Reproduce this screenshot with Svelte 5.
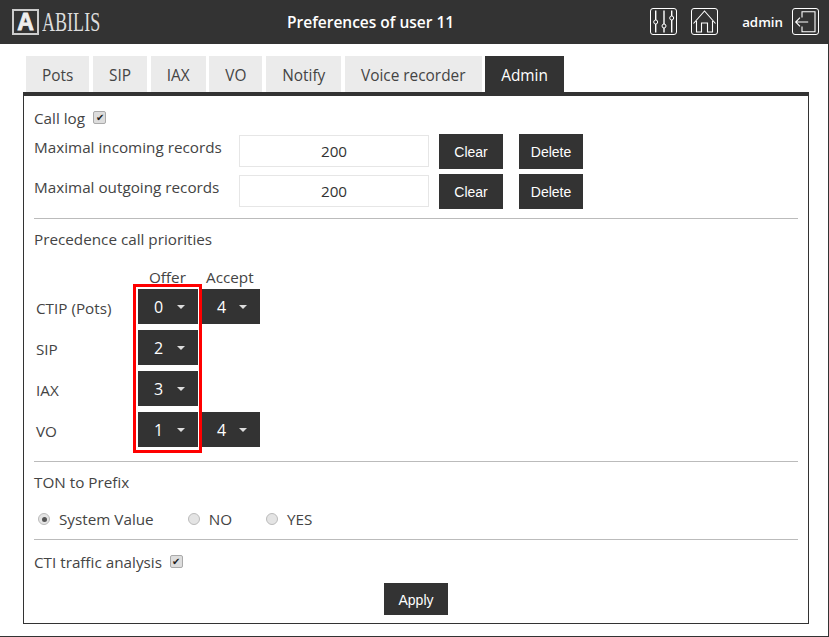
<script>
  const tabs = ["Pots", "SIP", "IAX", "VO", "Notify", "Voice recorder", "Admin"];
  const records = [
    { label: "Maximal incoming records", value: "200" },
    { label: "Maximal outgoing records", value: "200" },
  ];
  const priorities = [
    { label: "CTIP (Pots)", offer: 0, accept: 4 },
    { label: "SIP", offer: 2 },
    { label: "IAX", offer: 3 },
    { label: "VO", offer: 1, accept: 4 },
  ];
  const tonOptions = [
    { label: "System Value", checked: true },
    { label: "NO", checked: false },
    { label: "YES", checked: false },
  ];
</script>

<div class="page">
  <header class="topbar">
    <div class="logo">
      <span class="logo-box">A</span>
      <span class="logo-text">ABILIS</span>
    </div>
    <div class="title">Preferences of user 11</div>
    <div class="tools">
      <span class="icon-btn">
        <svg width="28" height="28" viewBox="0 0 28 28" fill="none" stroke="#fff" stroke-width="1">
          <rect x="0.5" y="0.5" width="26" height="26" rx="2.5" />
          <path d="M5.700 2.500v9.500M5.700 16v8.500M14 2.500v13.500M14 20v4.500M21.700 2.500v5.500M21.700 12v12.500" stroke-width="1.400" />
          <circle cx="5.700" cy="14" r="2" /><circle cx="14" cy="18" r="2" /><circle cx="21.700" cy="10" r="2" />
        </svg>
      </span>
      <span class="icon-btn home">
        <svg width="28" height="28" viewBox="0 0 28 28" fill="none" stroke="#fff" stroke-width="1">
          <rect x="0.5" y="0.5" width="26" height="26" rx="2.5" />
          <path d="M2.500 15.500 13.500 3 24.500 15.500M5.500 13v11h5v-9h6v9h5V13" stroke-width="1.100" />
        </svg>
      </span>
      <span class="user">admin</span>
      <span class="icon-btn">
        <svg width="28" height="28" viewBox="0 0 28 28" fill="none" stroke="#fff" stroke-width="1">
          <rect x="0.5" y="0.5" width="26" height="26" rx="2.5" />
          <path d="M10 9.500V3.700h13v20H10V18.500M3.700 14h12.500M8 9.700 3.700 14 8 18.300" stroke-width="1.100" />
        </svg>
      </span>
    </div>
  </header>

  <main class="content">
    <nav class="tabs">
      {#each tabs as tab}
        <div class="tab" class:active={tab === "Admin"}>{tab}</div>
      {/each}
    </nav>

    <section class="panel">
      <div class="check-row first">
        <span>Call log</span>
        <span class="check">✔</span>
      </div>
      {#each records as rec}
        <div class="record">
          <span class="record-label">{rec.label}</span>
          <div class="field">{rec.value}</div>
          <button class="btn clear">Clear</button>
          <button class="btn">Delete</button>
        </div>
      {/each}

      <hr class="rule-a" />
      <div class="heading">Precedence call priorities</div>

      <div class="prio">
        <div class="prio-head">
          <span class="col-offer">Offer</span>
          <span class="col-accept">Accept</span>
        </div>
        <div class="marked">
          {#each priorities as p}
            <div class="prio-row">
              <span class="prio-label">{p.label}</span>
              <div class="select">{p.offer}<i class="caret"></i></div>
              {#if p.accept !== undefined}
                <div class="select second">{p.accept}<i class="caret"></i></div>
              {/if}
            </div>
          {/each}
          <div class="highlight"></div>
        </div>
      </div>

      <hr class="rule-b" />
      <div class="heading ton">TON to Prefix</div>
      <div class="radios">
        {#each tonOptions as opt}
          <span class="radio-item">
            <span class="radio" class:on={opt.checked}></span>{opt.label}
          </span>
        {/each}
      </div>

      <hr class="rule-c" />
      <div class="check-row">
        <span>CTI traffic analysis</span>
        <span class="check">✔</span>
      </div>
      <div class="apply"><button class="btn">Apply</button></div>
    </section>
  </main>
</div>

<style>
  :global(body) { margin: 0; background: #fff; }
  .page { width: 829px; height: 637px; box-sizing: border-box; border-right: 1px solid #333; border-bottom: 1px solid #333; font-family: "Open Sans", sans-serif; font-size: 15.25px; color: #444; overflow: hidden; }
  .topbar { height: 44px; background: #333; color: #fff; display: flex; align-items: center; position: relative; margin-right: -1px; }
  .logo { display: flex; align-items: center; margin-left: 12px; gap: 3px; }
  .logo-box { box-sizing: border-box; width: 27px; height: 26px; border: 2px solid #ccc; font-family: "Liberation Sans", sans-serif; font-weight: 700; font-size: 23px; line-height: 23px; text-align: center; color: #eee; -webkit-text-stroke: 0.8px #eee; }
  .logo-text { font-family: "Liberation Serif", serif; font-size: 28px; color: #ddd; display: block; width: 58px; transform: scaleX(0.645); transform-origin: left center; }
  .title { position: absolute; left: 287px; top: 11px; font-size: 15.5px; font-weight: 600; line-height: 22px; }
  .tools { margin-left: auto; display: flex; align-items: center; margin-right: 10px; }
  .icon-btn { display: block; height: 27px; width: 27px; margin-top: -1px; }
  .icon-btn svg { display: block; }
  .home { margin-left: 14px; }
  .user { margin: 0 9px 0 24px; font-size: 13.3px; font-weight: 600; }
  .content { padding: 12px 19px 0 23px; }
  .tabs { display: flex; gap: 3.7px; padding-left: 3px; height: 36px; }
  .tab { background: #ebebeb; color: #444; padding: 0 16px; line-height: 39px; font-size: 15.4px; }
  .tab.active { background: #333; color: #fff; }
  .panel { box-sizing: border-box; height: 532px; border: 1px solid #333; border-top-width: 4px; padding: 0 10px; }
  .check-row { display: flex; align-items: center; gap: 8px; line-height: 20px; }
  .check-row.first { padding-top: 12px; padding-bottom: 3px; }
  .check { width: 11px; height: 11px; border: 1px solid #aaa; border-radius: 2px; background: #ddd; color: #222; font-size: 10px; line-height: 11px; text-align: center; position: relative; top: -1px; }
  .record { display: flex; align-items: center; height: 40px; }
  .record-label { width: 205px; position: relative; top: -4px; }
  .field { box-sizing: border-box; width: 190px; height: 32px; border: 1px solid #e6e6e6; text-align: center; line-height: 31px; color: #333; }
  .btn { border: 0; background: #333; color: #fff; font-family: "Liberation Sans", sans-serif; font-size: 14px; width: 64px; height: 35px; padding: 1px 0 0; }
  .clear { margin: 0 16px 0 10px; }
  hr { border: 0; border-top: 1px solid #bbb; margin: 0; }
  .rule-a { margin-top: 7px; }
  .heading { line-height: 20px; margin-top: 10px; }
  .heading.ton { margin-top: 10px; }
  .prio { margin-top: 20px; }
  .prio-head { display: flex; line-height: 17px; padding-left: 115px; }
  .col-offer { width: 57px; }
  .prio-row { display: flex; align-items: center; height: 41px; gap: 3px; }
  .marked { position: relative; }
  .prio-label { width: 98px; padding: 2px 0 0 2px; margin-right: 1px; }
  .select { width: 60px; height: 35px; background: #333; color: #fff; font-size: 16px; display: flex; align-items: center; padding-left: 16px; box-sizing: border-box; position: relative; }
  .select.second { width: 58px; margin-left: 1px; padding-left: 15px; }
  .caret { position: absolute; right: 13px; top: 16px; border: 4px solid transparent; border-top-color: #ddd; border-bottom: 0; }
  .highlight { position: absolute; left: 99px; top: -2px; width: 69px; height: 169px; box-sizing: border-box; border: 3px solid #f00; pointer-events: none; }
  .rule-b { margin-top: 11px; }
  .radios { display: flex; margin-top: 17px; line-height: 20px; padding-left: 4px; }
  .radio-item { display: flex; align-items: center; gap: 9px; margin-right: 34px; }
  .radio { width: 10px; height: 10px; border: 1px solid #bbb; border-radius: 50%; background: #e4e4e4; box-sizing: content-box; position: relative; }
  .radio.on::after { content: ""; position: absolute; left: 2.500px; top: 2.500px; width: 5px; height: 5px; border-radius: 50%; background: #555; }
  .rule-c { margin-top: 10px; margin-bottom: 12px; }
  .apply { display: flex; justify-content: center; margin-top: 11px; }
  .apply .btn { height: 32px; }
</style>
